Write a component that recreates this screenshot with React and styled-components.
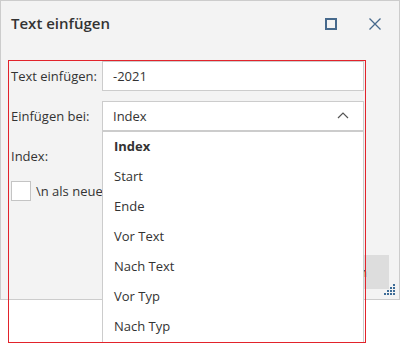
import React from 'react';
import styled, { createGlobalStyle } from 'styled-components';

const GlobalStyle = createGlobalStyle`
  html, body {
    margin: 0;
    padding: 0;
    background: #fff;
  }
  body {
    font-family: "Open Sans", "Noto Sans", sans-serif;
    color: #333;
  }
`;

const Page = styled.div`
  position: relative;
  width: 400px;
  height: 343px;
  overflow: hidden;
`;

const Dialog = styled.div`
  position: relative;
  box-sizing: border-box;
  width: 400px;
  height: 300px;
  background: #f3f3f3;
  border: 1px solid #cccccc;
  display: flex;
  flex-direction: column;
`;

const TitleBar = styled.div`
  height: 45px;
  display: flex;
  align-items: center;
  padding: 0 12px 0 10px;
  flex-shrink: 0;
`;

const Title = styled.h1`
  flex: 1;
  margin: 0;
  font-size: 15px;
  font-weight: 600;
  color: #333;
  margin-top: -1px;
`;

const IconButton = styled.button`
  border: 0;
  background: none;
  padding: 0;
  width: 24px;
  height: 24px;
  display: flex;
  align-items: center;
  justify-content: center;
  margin-left: ${p => p.gap}px;
  color: #46698c;
`;

const Body = styled.div`
  flex: 1;
  display: flex;
  flex-direction: column;
  padding: 15px 10px 10px 10px;
`;

const Form = styled.div`
  display: grid;
  grid-template-columns: 91px 262px;
  row-gap: 10px;
  align-items: center;
`;

const Label = styled.label`
  font-size: 13px;
  color: #333;
  padding-bottom: 1px;
`;

const Field = styled.div`
  box-sizing: border-box;
  height: 30px;
  background: #fff;
  border: 1px solid #cccccc;
  display: flex;
  align-items: center;
  justify-content: ${p => (p.select ? 'space-between' : 'flex-start')};
  padding: 0 ${p => (p.select ? 14 : 10)}px 1px 10px;
  font-size: 13px;
  color: #333;
`;

const Spacer = styled.div`
  height: 30px;
`;

/* the open list covers the rest of this row, so it is clipped at the field column */
const CheckRow = styled.div`
  grid-column: 1 / 2;
  display: flex;
  align-items: center;
  gap: 5px;
  font-size: 13px;
  white-space: nowrap;
  overflow: hidden;
`;

const Checkbox = styled.span`
  box-sizing: border-box;
  flex-shrink: 0;
  width: 20px;
  height: 20px;
  background: #fff;
  border: 1px solid #c4c4c4;
`;

const Footer = styled.div`
  margin-top: auto;
  display: flex;
  justify-content: flex-end;
`;

const Button = styled.button`
  height: 34px;
  width: 90px;
  border: 0;
  background: #dddddd;
  font-family: "Open Sans", sans-serif;
  font-size: 13px;
  color: #333;
  text-align: right;
  padding-right: 22px;
`;

const Grip = styled.svg`
  position: absolute;
  right: 3px;
  bottom: 3px;
`;

const DropList = styled.ul`
  position: absolute;
  left: 102px;
  top: 131px;
  width: 262px;
  box-sizing: border-box;
  margin: 0;
  padding: 0;
  list-style: none;
  background: #fff;
  border: 1px solid #cccccc;
`;

const Option = styled.li`
  height: 30px;
  display: flex;
  align-items: center;
  padding: 0 11px 2px;
  box-sizing: border-box;
  font-size: 13px;
  font-weight: ${p => (p.selected ? 700 : 400)};
  color: #333;
`;

const Highlight = styled.div`
  position: absolute;
  left: 8px;
  top: 60px;
  width: 358px;
  height: 283px;
  box-sizing: border-box;
  border: 1px solid #e2232b;
  pointer-events: none;
`;

const options = ['Index', 'Start', 'Ende', 'Vor Text', 'Nach Text', 'Vor Typ', 'Nach Typ'];

const gripDots = [
  [8, 0],
  [8, 3], [5, 3],
  [8, 6], [5, 6], [2, 6],
  [8, 9], [5, 9], [2, 9], [-1, 9],
];

export default function App() {
  return (
    <Page>
      <GlobalStyle />
      <Dialog>
        <TitleBar>
          <Title>Text einfügen</Title>
          <IconButton gap={0}>
            <svg width="12" height="12" viewBox="0 0 12 12">
              <rect x="1" y="1" width="10" height="10" fill="none" stroke="currentColor" strokeWidth="2" />
            </svg>
          </IconButton>
          <IconButton gap={20}>
            <svg width="12" height="12" viewBox="0 0 12 12">
              <path d="M0.5 0.5 L11.5 11.5 M11.5 0.5 L0.5 11.5" stroke="currentColor" strokeWidth="1.3" />
            </svg>
          </IconButton>
        </TitleBar>
        <Body>
          <Form>
            <Label>Text einfügen:</Label>
            <Field>-2021</Field>
            <Label>Einfügen bei:</Label>
            <Field select>
              Index
              <svg width="12" height="7" viewBox="0 0 12 7">
                <path d="M1 6 L6 1 L11 6" fill="none" stroke="#555" strokeWidth="1.2" />
              </svg>
            </Field>
            <Label>Index:</Label>
            <Spacer />
            <CheckRow>
              <Checkbox />
              \n als neue Zeile
            </CheckRow>
          </Form>
          <Footer>
            <Button>Einfügen</Button>
          </Footer>
        </Body>
        <Grip width="12" height="12" viewBox="-1 0 12 12">
          {gripDots.map(([x, y], i) => (
            <rect key={i} x={x} y={y} width="2" height="2" fill="#3e6c97" />
          ))}
        </Grip>
      </Dialog>
      <DropList>
        {options.map(o => (
          <Option key={o} selected={o === 'Index'}>{o}</Option>
        ))}
      </DropList>
      <Highlight />
    </Page>
  );
}
